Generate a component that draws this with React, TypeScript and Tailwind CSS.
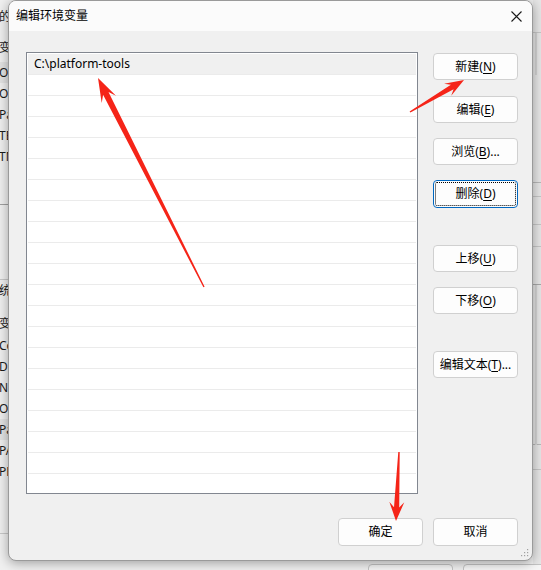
import React from "react";

const FONT = "font-['Noto_Sans','Noto_Sans_CJK_SC',sans-serif]";

// rows of the "环境变量" window that peeks out on the left
const BACK_ROWS = [
  { h: "h-[34px]", t: "的", cls: "" },
  { h: "h-[28px]", t: "变", cls: "" },
  { h: "h-[21px]", t: "On", cls: "bg-[#e3e3e3]" },
  { h: "h-[21px]", t: "On", cls: "" },
  { h: "h-[21px]", t: "Pa", cls: "" },
  { h: "h-[21px]", t: "TE", cls: "" },
  { h: "h-[21px]", t: "TM", cls: "" },
  { h: "h-[38px]", t: "", cls: "border-b border-[#a0a0a0]" },
  { h: "h-[75px]", t: "", cls: "border-b border-[#c8c8c8]" },
  { h: "h-[22px]", t: "统", cls: "" },
  { h: "h-[10px]", t: "", cls: "" },
  { h: "h-[23px]", t: "变", cls: "" },
  { h: "h-[21px]", t: "Co", cls: "" },
  { h: "h-[21px]", t: "Dr", cls: "" },
  { h: "h-[21px]", t: "NU", cls: "" },
  { h: "h-[21px]", t: "OS", cls: "" },
  { h: "h-[21px]", t: "Pa", cls: "bg-[#e3e3e3]" },
  { h: "h-[21px]", t: "PA", cls: "" },
  { h: "h-[21px]", t: "PR", cls: "" },
  { h: "h-[52px]", t: "", cls: "border-b border-[#c8c8c8]" },
];

const LIST_ROWS = Array.from({ length: 20 }, (_, i) => i);

function arrowPoints(
  tx: number,
  ty: number,
  px: number,
  py: number,
  head: number,
  barb: number,
  shaft: number,
  tail = 0.7
) {
  const dx = px - tx;
  const dy = py - ty;
  const len = Math.hypot(dx, dy);
  const ux = dx / len;
  const uy = dy / len;
  const nx = -uy;
  const ny = ux;
  const bx = px - ux * head * 0.72;
  const by = py - uy * head * 0.72;
  const hx = px - ux * head;
  const hy = py - uy * head;
  const pts = [
    [tx + nx * tail, ty + ny * tail],
    [bx + nx * shaft, by + ny * shaft],
    [hx + nx * barb, hy + ny * barb],
    [px, py],
    [hx - nx * barb, hy - ny * barb],
    [bx - nx * shaft, by - ny * shaft],
    [tx - nx * tail, ty - ny * tail],
  ];
  return pts.map((p) => `${p[0].toFixed(1)},${p[1].toFixed(1)}`).join(" ");
}

function Btn({
  pre,
  k,
  post = "",
  focused = false,
}: {
  pre: string;
  k?: string;
  post?: string;
  focused?: boolean;
}) {
  return (
    <button
      className={
        focused
          ? "flex h-[28px] w-[85px] items-center justify-center rounded-[4px] border border-[#0067c0] bg-[#fdfdfd] text-[12px] text-black outline-1 outline-dotted outline-black -outline-offset-[3px]"
          : "flex h-[27px] w-[85px] items-center justify-center rounded-[4px] border border-[#d0d0d0] bg-[#fdfdfd] text-[12px] text-black"
      }
    >
      <span>
        {pre}
        {k && (
          <>
            (<span className="underline underline-offset-2">{k}</span>)
          </>
        )}
        {post}
      </span>
    </button>
  );
}

export default function App() {
  return (
    <div className={`relative h-[570px] w-[541px] overflow-hidden bg-[#f0f0f0] ${FONT}`}>
      {/* window behind */}
      <div className="flex h-full">
        <div className="flex w-[8px] shrink-0 flex-col overflow-hidden text-[12px] text-[#1b1b1b]">
          {BACK_ROWS.map((r, i) => (
            <div key={i} className={`flex shrink-0 items-center whitespace-nowrap ${r.h} ${r.cls}`}>
              <span className="-ml-[1px]">{r.t}</span>
            </div>
          ))}
        </div>
        <div className="flex min-w-0 flex-1 flex-col justify-end">
          <div className="flex gap-[10px] pl-[360px]">
            <div className="h-[8px] w-[85px] shrink-0 translate-y-[2px] rounded-t-[4px] border border-[#c4c4c4] bg-[#f6f6f6]" />
            <div className="h-[8px] w-[85px] shrink-0 translate-y-[2px] rounded-t-[4px] border border-[#c4c4c4] bg-[#f6f6f6]" />
          </div>
        </div>
        <div className="flex w-[8px] shrink-0 flex-col bg-[#e6e6e6]">
          <div className="h-[33px] border-b border-[#c6c6c6]" />
          <div className="h-[150px] border-b border-[#b8b8b8] pl-[2px]">
            <div className="h-[42px] w-[2px] bg-[#d2d2d2]" />
          </div>
          <div className="h-[14px] border-b border-[#c6c6c6]" />
          <div className="h-[28px] border-b border-[#c6c6c6]" />
          <div className="h-[22px] border-b border-[#c6c6c6]" />
          <div className="h-[38px] border-b border-[#a8a8a8]" />
          <div className="h-[160px] border-b border-[#b8b8b8] pl-[2px]">
            <div className="h-[160px] w-[2px] bg-[#d4d4d4]" />
          </div>
          <div className="h-[25px] border-b border-[#c6c6c6]" />
        </div>
      </div>

      {/* 编辑环境变量 dialog */}
      <div className="absolute left-[8px] top-0 flex h-[561px] w-[525px] flex-col overflow-hidden rounded-[8px] border border-[#9a9a9a] bg-[#f0f0f0] shadow-[0_2px_12px_rgba(0,0,0,0.35)]">
        <div className="flex h-[30px] shrink-0 items-center justify-between bg-[#fbfbfb] pl-[7px] pr-[9px]">
          <span className="text-[12px] text-black">编辑环境变量</span>
          <svg width="11" height="11" viewBox="0 0 11 11" className="mr-[1px]">
            <path d="M0.5 0.5 L10.5 10.5 M10.5 0.5 L0.5 10.5" stroke="#1a1a1a" strokeWidth="1.1" />
          </svg>
        </div>

        <div className="flex flex-1 flex-col pb-[16px] pl-[17px] pr-[14px] pt-[21px]">
          <div className="flex gap-[15px]">
            <div className="h-[442px] w-[392px] shrink-0 border border-[#828790] bg-white p-[1px]">
              {LIST_ROWS.map((i) => (
                <div
                  key={i}
                  className={
                    i === 0
                      ? "flex h-[21px] items-center border-b border-[#ebebeb] bg-[#f0f0f0] pl-[6px] text-[12px] text-black"
                      : "h-[21px] border-b border-[#ebebeb]"
                  }
                >
                  {i === 0 && "C:\\platform-tools"}
                </div>
              ))}
            </div>

            <div className="flex shrink-0 flex-col pt-[1px]">
              <Btn pre="新建" k="N" />
              <div className="mt-[16px]">
                <Btn pre="编辑" k="E" />
              </div>
              <div className="mt-[15px]">
                <Btn pre="浏览" k="B" post="..." />
              </div>
              <div className="mt-[15px]">
                <Btn pre="删除" k="D" focused />
              </div>
              <div className="mt-[37px]">
                <Btn pre="上移" k="U" />
              </div>
              <div className="mt-[15px]">
                <Btn pre="下移" k="O" />
              </div>
              <div className="mt-[37px]">
                <Btn pre="编辑文本" k="T" post="..." />
              </div>
            </div>
          </div>

          <div className="mt-[24px] flex justify-end gap-[10px]">
            <button className="h-[28px] w-[85px] rounded-[4px] border border-[#d0d0d0] bg-[#fdfdfd] text-[12px] text-black">
              确定
            </button>
            <button className="h-[28px] w-[85px] rounded-[4px] border border-[#d0d0d0] bg-[#fdfdfd] text-[12px] text-black">
              取消
            </button>
          </div>
        </div>

        {/* size grip */}
        <svg width="9" height="9" viewBox="0 0 9 9" className="absolute bottom-[3px] right-[3px]">
          <rect x="7" y="1" width="1.2" height="1.2" fill="#a0a0a0" />
          <rect x="4" y="4" width="1.2" height="1.2" fill="#a0a0a0" />
          <rect x="7" y="4" width="1.2" height="1.2" fill="#a0a0a0" />
          <rect x="1" y="7" width="1.2" height="1.2" fill="#a0a0a0" />
          <rect x="4" y="7" width="1.2" height="1.2" fill="#a0a0a0" />
          <rect x="7" y="7" width="1.2" height="1.2" fill="#a0a0a0" />
        </svg>
      </div>

      {/* red annotation arrows */}
      <svg className="pointer-events-none absolute inset-0" width="541" height="570" viewBox="0 0 541 570">
        <polygon points={arrowPoints(204, 287, 98, 78, 24, 8, 3)} fill="#f52418" />
        <polygon points={arrowPoints(410, 112, 464, 80, 19, 7, 2.6)} fill="#f52418" />
        <polygon points={arrowPoints(399, 452, 396, 521, 19, 7.5, 2.6)} fill="#f52418" />
      </svg>
    </div>
  );
}
